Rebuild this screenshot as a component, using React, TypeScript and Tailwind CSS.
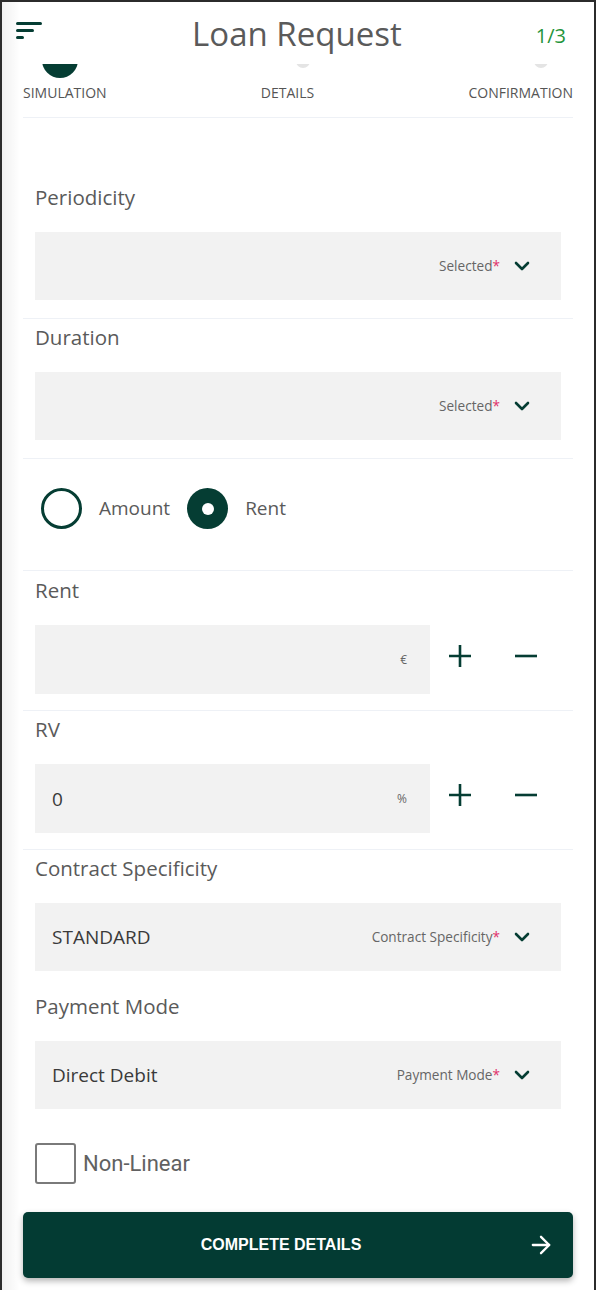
import React from 'react';
import { ChevronDown, ArrowRight } from 'lucide-react';

const green = 'text-[#053d33]';

const Menu = () => (
  <div className="flex flex-col gap-[4px] pt-[1px]">
    <span className="block h-[3px] w-[26px] rounded-full bg-[#053d33]" />
    <span className="block h-[3px] w-[18px] rounded-full bg-[#053d33]" />
    <span className="block h-[3px] w-[8px] rounded-full bg-[#053d33]" />
  </div>
);

const Plus = () => (
  <svg width="24" height="24" viewBox="0 0 24 24" className={green}>
    <path d="M12 1v22M1 12h22" stroke="currentColor" strokeWidth="2.6" />
  </svg>
);

const Minus = () => (
  <svg width="24" height="24" viewBox="0 0 24 24" className={green}>
    <path d="M1 12h22" stroke="currentColor" strokeWidth="2.6" />
  </svg>
);

type SelectProps = { label: string; value?: string; hint: string };

const SelectField: React.FC<SelectProps> = ({ label, value, hint }) => (
  <>
    <label className="block px-3 text-[20.5px] leading-[28px] text-[#5a5a5a]">{label}</label>
    <div className="mx-3 mt-[21px] flex h-[68px] items-center bg-[#f2f2f2] pl-[17px] pr-[27px]">
      <span className="flex-1 text-[19px] text-[#3a3a3a]">{value}</span>
      <span className="text-[13.6px] text-[#666]">
        {hint}
        <span className="text-[#e0306a]">*</span>
      </span>
      <ChevronDown className={`ml-[10px] ${green}`} size={24} strokeWidth={2.6} />
    </div>
  </>
);

const NumberField: React.FC<{ label: string; value?: string; unit: string }> = ({ label, value, unit }) => (
  <>
    <label className="block px-3 text-[20.5px] leading-[28px] text-[#5a5a5a]">{label}</label>
    <div className="mx-3 mt-[21px] flex items-center">
      <div className="flex h-[69px] w-[395px] items-center bg-[#f2f2f2] pl-[17px] pr-[23px]">
        <span className="flex-1 pt-[2px] text-[19px] text-[#3a3a3a]">{value}</span>
        <span className="text-[12px] text-[#666]">{unit}</span>
      </div>
      <div className="mb-[8px] ml-[18px] flex items-center gap-[42px]">
        <Plus />
        <Minus />
      </div>
    </div>
  </>
);

const Step: React.FC<{ label: string; active?: boolean; offset: string }> = ({ label, active, offset }) => (
  <div className="flex flex-col">
    <div className={`h-[14px] overflow-hidden ${offset}`}>
      {active ? (
        <div className="-mt-[22px] h-[36px] w-[36px] rounded-full bg-[#053d33]" />
      ) : (
        <div className="-mt-[10px] h-[14px] w-[14px] rounded-full bg-[#e4e4e4]" />
      )}
    </div>
    <span className="mt-[7px] text-[14px] leading-[16px] text-[#555]">{label}</span>
  </div>
);

export default function App() {
  return (
    <div className="relative h-[1290px] w-full overflow-hidden border-x-[2px] border-t-[2px] border-[#2b2b2b] bg-white font-['Open_Sans',sans-serif]">
      <div className="pointer-events-none absolute inset-y-0 left-0 z-20 w-[18px] bg-gradient-to-r from-black/[0.06] to-transparent" />

      {/* header */}
      <header className="relative z-10 flex h-[62px] items-start bg-white px-[14px] pt-[19px]">
        <Menu />
        <h1 className="-mt-[7px] flex-1 pl-[16px] text-center text-[33px] leading-[40px] text-[#5a5a5a]">Loan Request</h1>
        <span className="mr-[14px] -mt-[1px] text-[20px] leading-[32px] text-[#23943a]">1/3</span>
      </header>

      <div className="px-[21px]">
        {/* stepper */}
        <div className="flex justify-between border-b border-[#eef1f6] pb-[16px]">
          <Step label="SIMULATION" active offset="ml-[19px]" />
          <Step label="DETAILS" offset="ml-[35px]" />
          <Step label="CONFIRMATION" offset="ml-[66px]" />
        </div>

        <section className="border-b border-[#eef1f6] pt-[65px] pb-[18px]">
          <SelectField label="Periodicity" hint="Selected" />
        </section>
        <section className="border-b border-[#eef1f6] pt-[4px] pb-[18px]">
          <SelectField label="Duration" hint="Selected" />
        </section>

        {/* mode switch */}
        <section className="flex items-center border-b border-[#eef1f6] px-[18px] pt-[29px] pb-[41px]">
          <span className="h-[41px] w-[41px] rounded-full border-[3px] border-[#053d33]" />
          <span className="ml-[17px] text-[19px] text-[#5a5a5a]">Amount</span>
          <span className="ml-[17px] flex h-[41px] w-[41px] items-center justify-center rounded-full bg-[#053d33]">
            <span className="h-[12px] w-[12px] rounded-full bg-white" />
          </span>
          <span className="ml-[17px] text-[19px] text-[#5a5a5a]">Rent</span>
        </section>

        <section className="border-b border-[#eef1f6] pt-[5px] pb-[16px]">
          <NumberField label="Rent" unit="€" />
        </section>
        <section className="border-b border-[#eef1f6] pt-[4px] pb-[16px]">
          <NumberField label="RV" value="0" unit="%" />
        </section>

        <section className="pt-[4px]">
          <SelectField label="Contract Specificity" value="STANDARD" hint="Contract Specificity" />
        </section>
        <section className="pt-[21px]">
          <SelectField label="Payment Mode" value="Direct Debit" hint="Payment Mode" />
        </section>

        <label className="mx-3 mt-[34px] flex items-center font-['Roboto',sans-serif]">
          <span className="h-[41px] w-[41px] rounded-[3px] border-[2px] border-[#7a7a7a]" />
          <span className="ml-[7px] text-[22px] text-[#616161]">Non-Linear</span>
        </label>

        <button className="mt-[28px] flex h-[66px] w-full items-center rounded-[5px] bg-[#033b33] pl-[12px] pr-[18px] shadow-[0_3px_6px_rgba(0,0,0,0.3)] font-['Liberation_Sans',sans-serif]">
          <span className="flex-1 text-center text-[16px] font-bold text-white">COMPLETE DETAILS</span>
          <ArrowRight className="text-white" size={28} strokeWidth={2} />
        </button>
      </div>
    </div>
  );
}
